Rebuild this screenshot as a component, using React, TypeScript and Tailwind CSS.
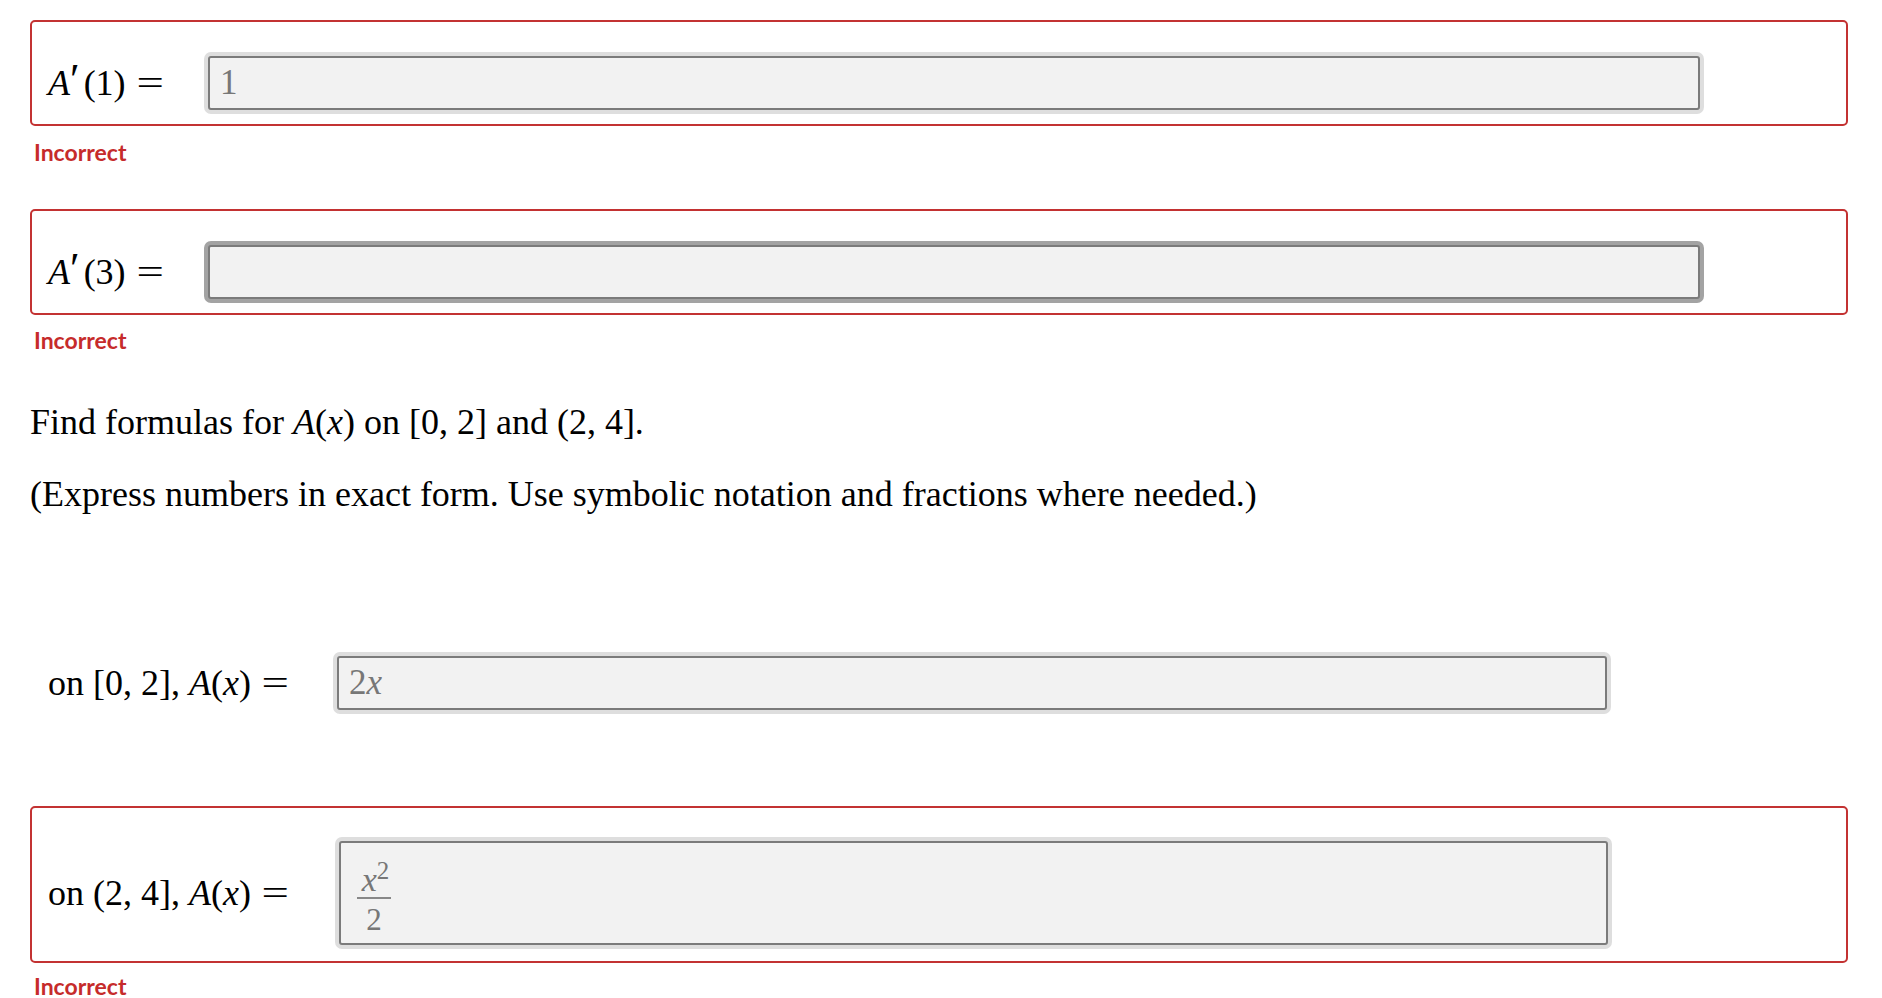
const serif = "font-['Liberation_Serif',serif]";

function AnswerInput({
  children,
  dark,
  tall,
  width,
}: {
  children?: React.ReactNode;
  dark?: boolean;
  tall?: boolean;
  width: string;
}) {
  return (
    <div
      className={`${width} ${tall ? "h-[104px]" : "h-[54px]"} ${
        dark ? "shadow-[0_0_0_4px_#a3a3a3]" : "shadow-[0_0_0_4px_#dedede]"
      } shrink-0 rounded-[3px] border-2 border-[#7b7b7b] bg-[#f2f2f2] flex items-center pl-[10px] text-[#777] ${serif} text-[35px]`}
    >
      {children}
    </div>
  );
}

function Incorrect({ className }: { className?: string }) {
  return (
    <div
      className={`h-[22px] leading-[22px] pl-[4px] text-[23px] font-bold text-[#c62b2b] font-['Lato',sans-serif] ${className}`}
    >
      Incorrect
    </div>
  );
}

// "=" in the typeset maths is wider and gets thick spaces on both sides
const Eq = () => (
  <span className="inline-block ml-[14px] mr-[6px] scale-x-[1.35]">=</span>
);
const Prime = () => (
  <span className="inline-block text-[44px] leading-none relative top-[-1px] mr-[4px]">′</span>
);

export default function App() {
  return (
    <div className={`min-h-[998px] bg-white pl-[30px] pr-[34px] pt-[20px] text-black ${serif}`}>
      <div className="h-[106px] rounded-[5px] border-2 border-[#c33232] flex items-center pl-[16px] pt-[20px]">
        <div className="w-[160px] text-[36px] whitespace-nowrap">
          <i>A</i>
          <Prime />
          (1)
          <Eq />
        </div>
        <AnswerInput width="w-[1492px]">1</AnswerInput>
      </div>
      <Incorrect className="mt-[15px]" />

      <div className="mt-[46px] h-[106px] rounded-[5px] border-2 border-[#c33232] flex items-center pl-[16px] pt-[20px]">
        <div className="w-[160px] text-[36px] whitespace-nowrap">
          <i>A</i>
          <Prime />
          (3)
          <Eq />
        </div>
        <AnswerInput width="w-[1492px]" dark />
      </div>
      <Incorrect className="mt-[14px]" />

      <p className="mt-[51px] h-[40px] leading-[40px] text-[36px]">
        Find formulas for <i>A</i>(<i>x</i>) on [0, 2] and (2, 4].
      </p>
      <p className="mt-[32px] h-[40px] leading-[40px] text-[36px]">
        (Express numbers in exact form. Use symbolic notation and fractions where needed.)
      </p>

      <div className="mt-[116px] h-[106px] flex items-center pl-[18px]">
        <div className="w-[289px] text-[36px] whitespace-nowrap">
          on [0, 2], <i>A</i>(<i>x</i>)
          <Eq />
        </div>
        <AnswerInput width="w-[1270px]">
          2<i>x</i>
        </AnswerInput>
      </div>

      <div className="mt-[70px] h-[157px] rounded-[5px] border-2 border-[#c33232] flex items-center pl-[16px] pt-[17px]">
        <div className="w-[291px] text-[36px] whitespace-nowrap">
          on (2, 4], <i>A</i>(<i>x</i>)
          <Eq />
        </div>
        <AnswerInput width="w-[1269px]" tall>
          <div className="flex flex-col items-center ml-[6px] mt-[12px] leading-none">
            <div className="text-[34px] pl-[3px]">
              <i>x</i>
              <span className="text-[25px] relative top-[-12px]">2</span>
            </div>
            <div className="h-[2px] w-[34px] bg-[#888]" />
            <div className="text-[31px] pt-[5px]">2</div>
          </div>
        </AnswerInput>
      </div>
      <Incorrect className="mt-[12px]" />
    </div>
  );
}
